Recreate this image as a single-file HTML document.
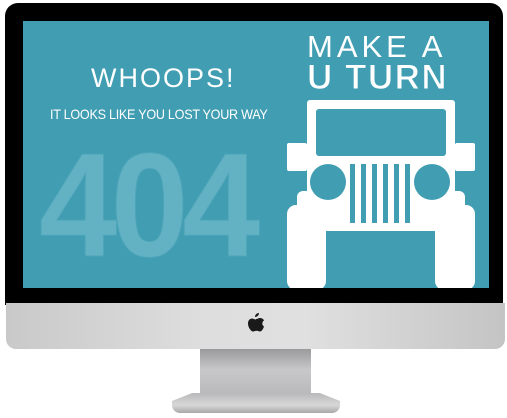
<!DOCTYPE html><html><head><style>
body{margin:0;width:507px;height:418px;background:#fff;position:relative;overflow:hidden;font-family:"Liberation Sans",sans-serif}
.bez{position:absolute;left:5px;top:3px;width:498px;height:302px;background:#000;border-radius:13px 13px 0 0}
.scr{position:absolute;left:23px;top:21px;width:466px;height:267px;background:#409db2;overflow:hidden}
.chin{position:absolute;left:6px;top:303px;width:499px;height:46px;background:linear-gradient(90deg,#c9c9c9,#dedede 40%,#e0e0e0 60%,#c4c4c4);border-radius:0 0 10px 10px}
.t{position:absolute;color:#fff;white-space:nowrap}
</style></head><body>
<div class="bez"></div>
<div class="scr">
<div class="t" style="left:68px;top:42px;font-size:27px;letter-spacing:2px;font-weight:300">WHOOPS!</div>
<div class="t" style="left:27px;top:85px;font-size:14px;letter-spacing:-0.3px;transform:scaleX(0.9);transform-origin:0 0">IT LOOKS LIKE YOU LOST YOUR WAY</div>
<div class="t" style="left:16px;top:100px;font-size:148px;font-weight:bold;color:#63b2c4;letter-spacing:-7px;-webkit-text-stroke:1px #4ea5b9;transform:scaleX(0.95);transform-origin:0 0">404</div>
<div class="t" style="left:284px;top:8px;font-size:31px;letter-spacing:4px">MAKE A</div>
<div class="t" style="left:284px;top:37px;font-size:35px;font-weight:bold;letter-spacing:1.5px;-webkit-text-stroke:1px #409db2">U TURN</div>
<svg style="position:absolute;left:0;top:0" width="466" height="267">
<g fill="#fff">
<rect x="284" y="79" width="148" height="110" rx="3"/>
<rect x="264" y="122" width="20" height="28" rx="2"/>
<rect x="432" y="122" width="20" height="28" rx="2"/>
<rect x="274" y="170" width="168" height="40" rx="6"/>
<rect x="264" y="184" width="39" height="85" rx="9"/>
<rect x="412" y="184" width="40" height="85" rx="9"/>
</g>
<g fill="#409db2">
<rect x="293" y="88" width="130" height="47" rx="3"/>
<circle cx="305" cy="161" r="18"/>
<circle cx="409" cy="161" r="18"/>
<rect x="327" y="143" width="5" height="59"/><rect x="338" y="143" width="5" height="59"/><rect x="349" y="143" width="5" height="59"/><rect x="360" y="143" width="5" height="59"/><rect x="371" y="143" width="5" height="59"/><rect x="382" y="143" width="5" height="59"/>
<rect x="303" y="210" width="109" height="60"/>
</g>
</svg>
</div>
<div class="chin"></div>
<svg style="position:absolute;left:246px;top:312px" width="20" height="24" viewBox="0 0 20 24"><path fill="#1a1a1a" d="M13 1c0 2-1.5 4-4 4 0-2 1.5-4 4-4zM10 7c1.5 0 2.5-1 4-1 2 0 3.5 1.2 4 2.5-2 1-2.5 4.5 0 6-.8 2.5-2.5 5-4 5-1.3 0-1.8-.8-3.5-.8S8.3 19.5 7 19.5c-2 0-5-4-5-8 0-3.2 2-5 4-5 1.5 0 2.5 1 4 1z"/></svg>
<div style="position:absolute;left:200px;top:349px;width:111px;height:52px;background:linear-gradient(#9a9a9c,#c8c8ca 40%,#b5b5b7);clip-path:polygon(0 0,100% 0,100% 40%,115% 100%,-15% 100%,0 40%)"></div>
<div style="position:absolute;left:172px;top:393px;width:168px;height:20px;background:linear-gradient(#b8b8ba,#d8d8d8 60%,#a8a8a8);border-radius:4px 4px 8px 8px;clip-path:polygon(12% 0,88% 0,100% 40%,100% 100%,0 100%,0 40%)"></div>
</body></html>
